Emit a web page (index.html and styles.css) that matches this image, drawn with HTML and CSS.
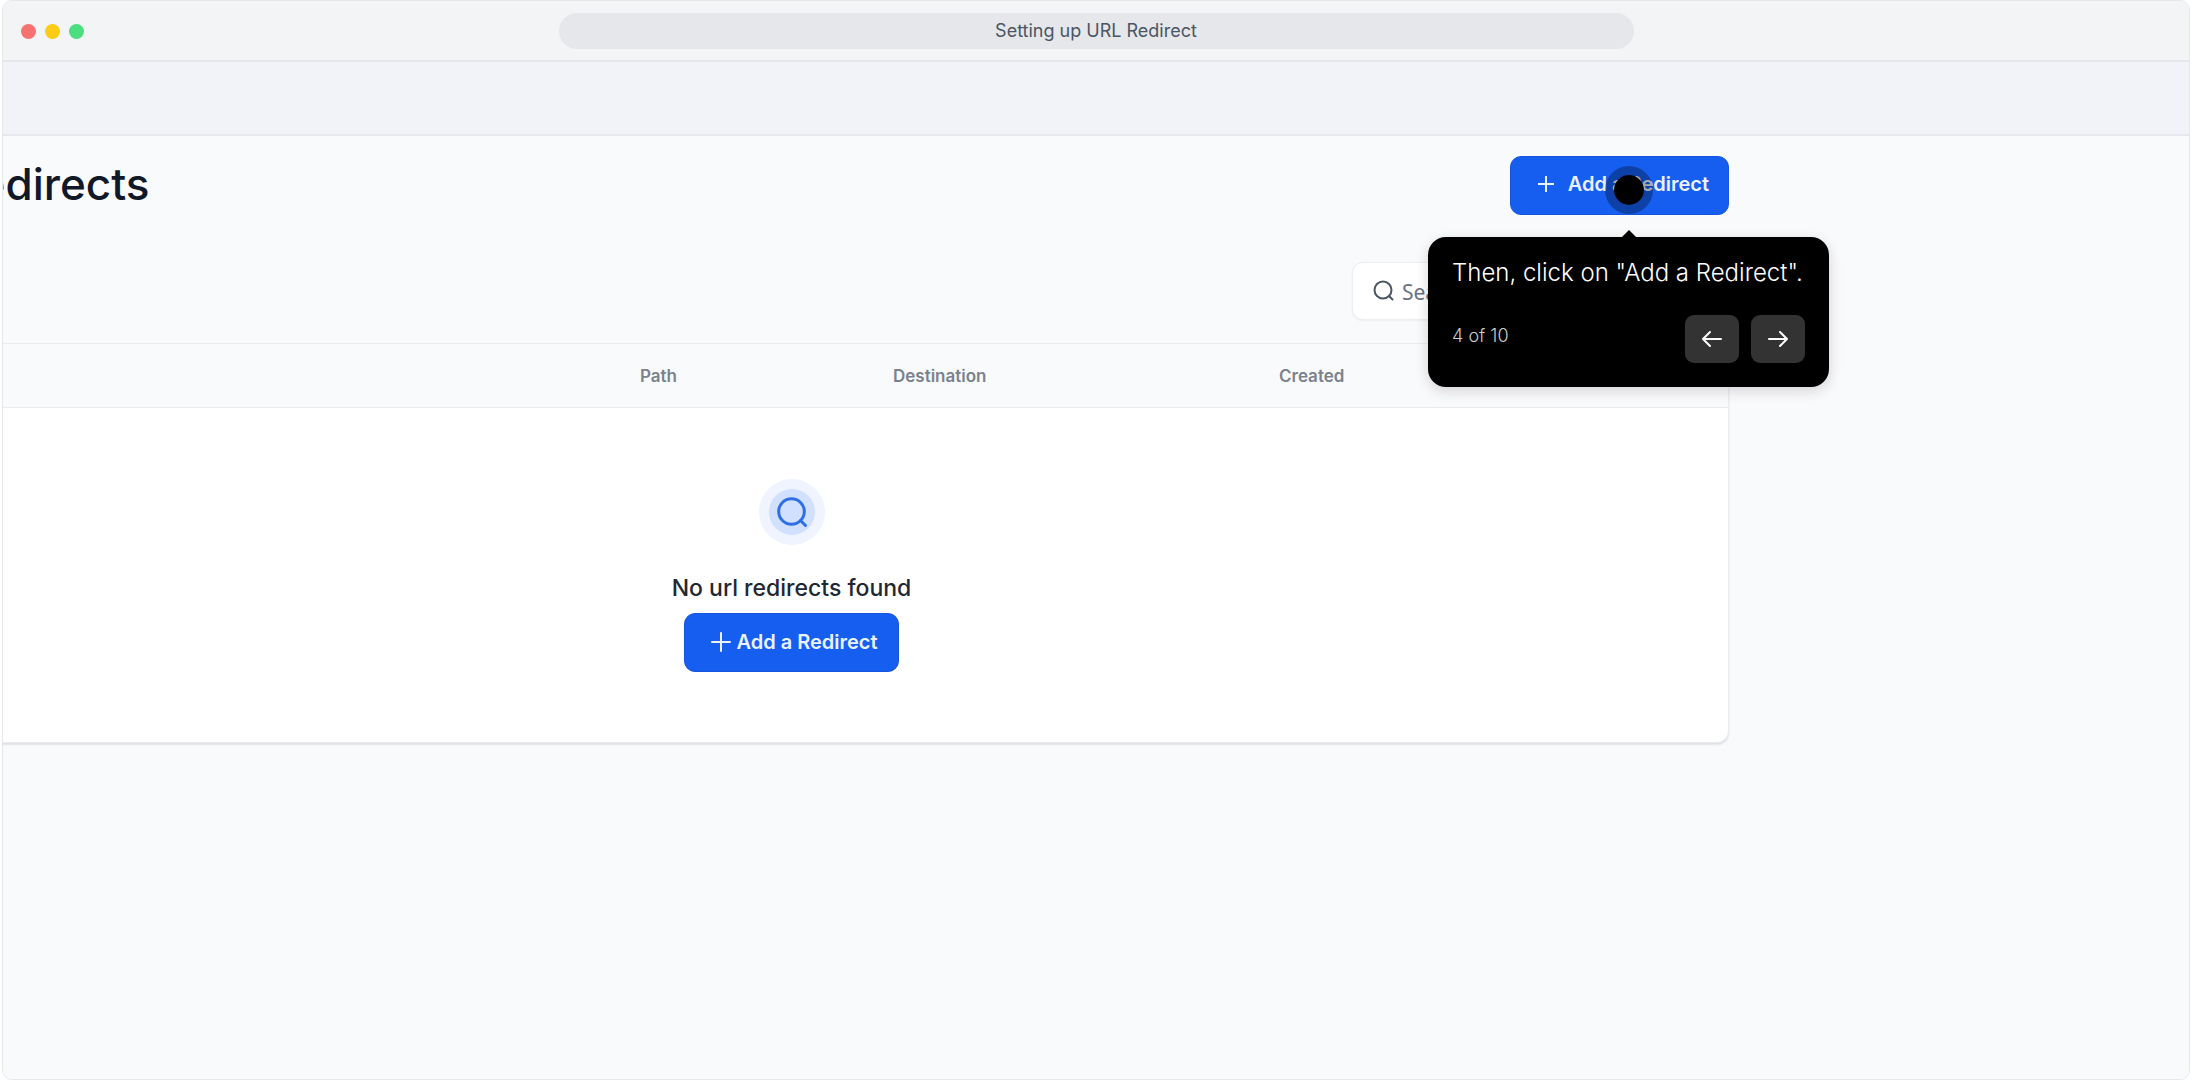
FILE: index.html
```html
<!DOCTYPE html>
<html lang="en">
<head>
    <meta charset="UTF-8">
    <meta name="viewport" content="width=device-width, initial-scale=1.0">
    <title>Setting up URL Redirect</title>
    <link rel="stylesheet" href="styles.css">
</head>
<body>
    <div class="window">
        <header class="title-bar">
            <div class="dots">
                <span class="dot red"></span>
                <span class="dot yellow"></span>
                <span class="dot green"></span>
            </div>
            <div class="title">Setting up URL Redirect</div>
        </header>

        <div class="screen">
            <div class="top-nav"></div>

            <main class="content">
                <div class="page-header">
                    <h1>URL Redirects</h1>
                    <div class="step">
                        <button class="btn btn-header" type="button">
                            <svg width="16" height="16" viewBox="0 0 16 16"><path d="M8 0v16M0 8h16"/></svg>
                            Add a Redirect
                        </button>
                        <span class="hotspot"></span>
                        <div class="tooltip" role="dialog" aria-label="Step 4">
                            <p>Then, click on "Add a Redirect".</p>
                            <div class="tooltip-footer">
                                <span class="count">4 of 10</span>
                                <div class="arrows">
                                    <button type="button" aria-label="Previous">
                                        <svg width="22" height="22" viewBox="0 0 22 22"><path d="M20 11H2M9 4l-7 7 7 7"/></svg>
                                    </button>
                                    <button type="button" aria-label="Next">
                                        <svg width="22" height="22" viewBox="0 0 22 22"><path d="M2 11h18M13 4l7 7-7 7"/></svg>
                                    </button>
                                </div>
                            </div>
                        </div>
                    </div>
                </div>

                <div class="filters">
                    <label class="search">
                        <svg width="22" height="22" viewBox="0 0 22 22"><circle cx="10" cy="10" r="8.5"/><path d="M16 16l3.5 3.5"/></svg>
                        <input type="text" placeholder="Search" aria-label="Search">
                    </label>
                </div>

                <section class="card">
                    <table>
                        <thead>
                            <tr>
                                <th></th>
                                <th class="col-path">Path</th>
                                <th class="col-dest">Destination</th>
                                <th class="col-created">Created</th>
                            </tr>
                        </thead>
                        <tbody>
                            <tr>
                                <td colspan="4">
                                    <div class="empty">
                                        <div class="empty-icon">
                                            <svg width="32" height="32" viewBox="0 0 32 32"><circle cx="15.5" cy="15.5" r="12.8"/><path d="M24.5 24.5l5 5"/></svg>
                                        </div>
                                        <h2>No url redirects found</h2>
                                        <button class="btn btn-empty" type="button">
                                            <svg width="20" height="20" viewBox="0 0 20 20"><path d="M10 1v18M1 10h18"/></svg>
                                            Add a Redirect
                                        </button>
                                    </div>
                                </td>
                            </tr>
                        </tbody>
                    </table>
                </section>
            </main>
        </div>
    </div>
</body>
</html>
```
FILE: styles.css
```css
* {
    box-sizing: border-box;
}

body {
    margin: 0;
    background: #fff;
    font-family: Inter, "Liberation Sans", sans-serif;
}

h1, h2, p {
    margin: 0;
}

button, input {
    font-family: inherit;
}

svg {
    flex: none;
    fill: none;
    stroke: currentColor;
    stroke-width: 2;
    stroke-linecap: round;
    stroke-linejoin: round;
}

.window {
    display: flex;
    flex-direction: column;
    min-height: 100vh;
    margin: 0 2px;
    border: 1px solid #e5e7eb;
    border-radius: 10px;
    overflow: hidden;
}

.title-bar {
    display: grid;
    grid-template-columns: 1fr 2fr 1fr;
    align-items: center;
    padding: 12px 18px 11px;
    background: #f3f4f6;
    border-bottom: 2px solid #e5e7eb;
}

.dots {
    display: flex;
    gap: 9px;
}

.dot {
    width: 15px;
    height: 15px;
    border-radius: 50%;
}

.red {
    background: #f87171;
}

.yellow {
    background: #facc15;
}

.green {
    background: #4ade80;
}

.title {
    border-radius: 18px;
    background: #e5e7eb;
    color: #4b5563;
    font-size: 18px;
    line-height: 36px;
    text-align: center;
}

.screen {
    flex: 1;
    background: #f9fafc;
}

.top-nav {
    height: 74px;
    background: #f2f3f8;
    border-bottom: 2px solid #e6e8ec;
}

/* the view is panned to the right, so the content starts off screen */
.content {
    margin-left: -149px;
    padding: 20px 460px 40px 0;
}

.page-header {
    display: flex;
    justify-content: space-between;
    align-items: flex-start;
    margin-bottom: 47px;
}

h1 {
    color: #111827;
    font-size: 44px;
    font-weight: 500;
    line-height: 56px;
}

.step {
    position: relative;
}

.btn {
    display: flex;
    align-items: center;
    height: 59px;
    border: 1px solid #1554dc;
    border-radius: 11px;
    background: #155eef;
    color: #eaf1ff;
    font-size: 20px;
    font-weight: 600;
    line-height: 28px;
    cursor: pointer;
}

.btn-header {
    gap: 14px;
    padding: 0 19px 3px 27px;
}

.btn-empty {
    gap: 5px;
    padding: 0 20px 1px 26px;
}

.hotspot {
    position: absolute;
    right: 76px;
    top: 10px;
    width: 48px;
    height: 48px;
    border: 9px solid rgba(0, 0, 0, 0.3);
    border-radius: 50%;
    background: #000;
    background-clip: padding-box;
}

.tooltip {
    position: absolute;
    top: 81px;
    right: -100px;
    width: 401px;
    padding: 24px;
    border-radius: 18px;
    background: #000;
    box-shadow: 0 4px 14px rgba(30, 0, 10, 0.16);
    color: #fff;
    z-index: 1;
}

.tooltip::before {
    content: "";
    position: absolute;
    left: 194px;
    top: -7px;
    border: 7px solid transparent;
    border-top: 0;
    border-bottom-color: #000;
}

.tooltip p {
    font-size: 24px;
    font-weight: 300;
    line-height: 24px;
    white-space: nowrap;
}

.tooltip-footer {
    display: flex;
    justify-content: space-between;
    margin-top: 30px;
}

.count {
    color: #ccc;
    font-size: 18px;
    font-weight: 300;
    line-height: 42px;
}

.arrows {
    display: flex;
    gap: 12px;
}

.arrows button {
    display: flex;
    align-items: center;
    justify-content: center;
    width: 54px;
    height: 48px;
    padding: 0;
    border: none;
    border-radius: 9px;
    background: #333;
    color: #fff;
    cursor: pointer;
}

.filters {
    display: flex;
    justify-content: flex-end;
    padding: 0 26px 23px;
}

.search {
    display: flex;
    align-items: center;
    gap: 7px;
    width: 351px;
    height: 58px;
    padding: 0 20px;
    border: 1px solid #eceef1;
    border-radius: 11px;
    background: #fff;
    color: #4b5563;
    box-shadow: 0 1px 2px rgba(16, 24, 40, 0.05);
}

.search input {
    flex: 1;
    min-width: 0;
    padding: 2px 0 0;
    border: none;
    outline: none;
    background: none;
    font-family: "Noto Sans", sans-serif;
    font-size: 21px;
}

.search input::placeholder {
    color: #6b7280;
}

.card {
    border: 1px solid #e9ebee;
    border-radius: 0 0 12px 12px;
    background: #fff;
    box-shadow: 0 2px 2px rgba(16, 24, 40, 0.1);
    overflow: hidden;
}

table {
    width: 100%;
    border-collapse: collapse;
    table-layout: fixed;
}

th {
    height: 63px;
    padding: 2px 26px 0;
    border-bottom: 1px solid #e9ebef;
    background: #f9fafc;
    color: #7b828d;
    font-size: 17px;
    font-weight: 600;
    text-align: left;
}

.col-path {
    width: 253px;
}

.col-dest {
    width: 386px;
}

.col-created {
    width: 475px;
}

td {
    padding: 71px 0 70px;
}

.empty {
    display: flex;
    flex-direction: column;
    align-items: center;
}

.empty-icon {
    display: flex;
    align-items: center;
    justify-content: center;
    width: 66px;
    height: 66px;
    border: 10px solid #eff4ff;
    border-radius: 50%;
    background: #d1e0ff;
    color: #2f6fe4;
}

.empty-icon svg {
    stroke-width: 3;
}

.empty h2 {
    margin: 26px 0 8px;
    color: #1f2733;
    font-size: 23px;
    font-weight: 500;
    line-height: 34px;
}
```
